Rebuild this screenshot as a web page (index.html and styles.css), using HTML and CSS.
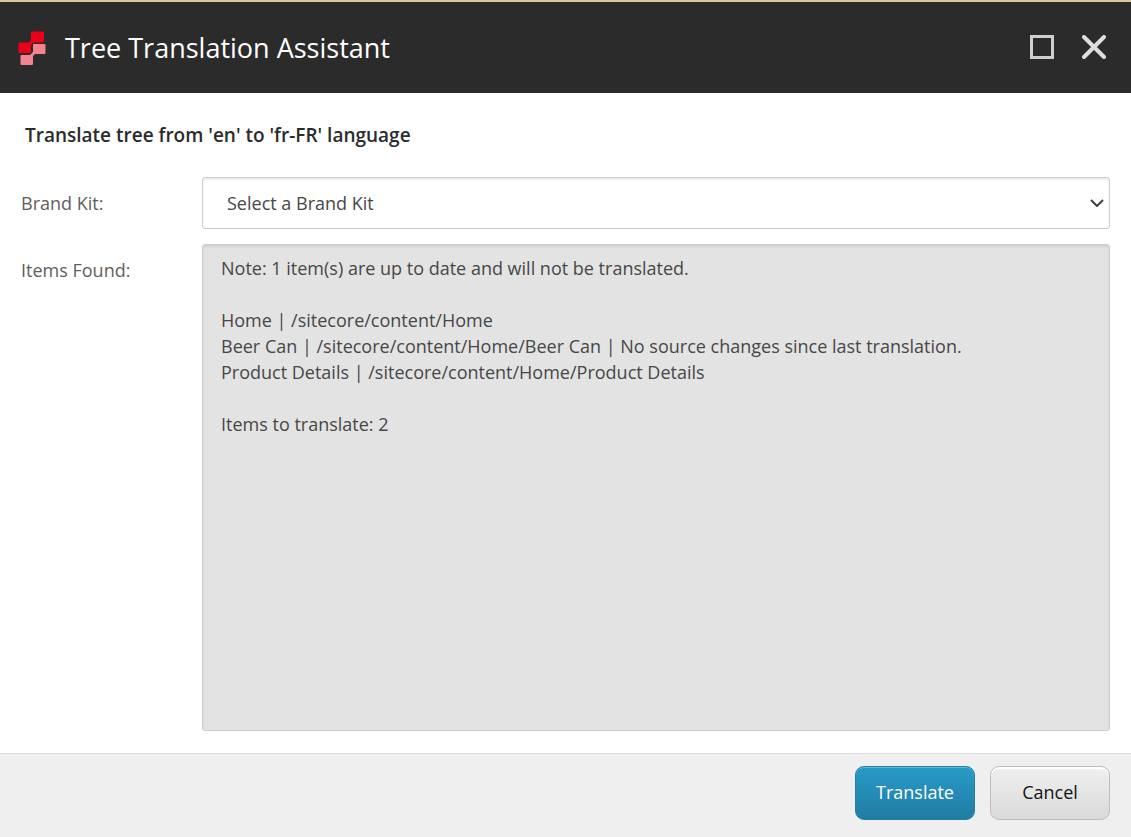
FILE: index.html
```html
<!DOCTYPE html>
<html lang="en">
<head>
<meta charset="UTF-8" />
<meta name="viewport" content="width=device-width, initial-scale=1" />
<title>Tree Translation Assistant</title>
<link rel="stylesheet" href="styles.css">
</head>
<body>

<header class="dialog-header">
  <svg class="logo" viewBox="0 0 28 34" aria-hidden="true">
    <path fill="#f5828f" d="M16 13h10.500a1 1 0 0 1 1 1v8a1 1 0 0 1-1 1h-9.500l-2 2v8a1 1 0 0 1-1 1h-10.500a1 1 0 0 1-1-1v-8a1 1 0 0 1 1-1h8.500l3-3v-7a1 1 0 0 1 1-1z"/>
    <path fill="#eb001a" d="M14 .5h11a1 1 0 0 1 1 1v9a1 1 0 0 1-1 1h-9l-3 2.500v7a1 1 0 0 1-1 1h-10.500a1 1 0 0 1-1-1v-8.500a1 1 0 0 1 1-1h9l2.500-2.500v-7.500a1 1 0 0 1 1-1z"/>
  </svg>
  <div class="dialog-title">Tree Translation Assistant</div>
  <button type="button" class="window-btn" aria-label="Maximize">
    <svg viewBox="0 0 24 24"><rect x="1.500" y="1.500" width="21" height="21" fill="none" stroke="#cfcfcf" stroke-width="3"/></svg>
  </button>
  <button type="button" class="window-btn" aria-label="Close">
    <svg viewBox="0 0 24 24"><path d="M2 2l20 20M22 2L2 22" fill="none" stroke="#dedede" stroke-width="4" stroke-linecap="round"/></svg>
  </button>
</header>

<form class="dialog-form">
  <main class="dialog-content">
    <h1>Translate tree from 'en' to 'fr-FR' language</h1>

    <div class="form-row">
      <label for="brand-kit">Brand Kit:</label>
      <div class="select-wrap">
        <select id="brand-kit">
          <option>Select a Brand Kit</option>
        </select>
        <svg class="chevron" viewBox="0 0 14 8" aria-hidden="true"><path d="M1 1l6 6 6-6" fill="none" stroke="#404040" stroke-width="2"/></svg>
      </div>
    </div>

    <div class="form-row items-row">
      <label for="items-found">Items Found:</label>
      <textarea id="items-found" readonly>Note: 1 item(s) are up to date and will not be translated.

Home | /sitecore/content/Home
Beer Can | /sitecore/content/Home/Beer Can | No source changes since last translation.
Product Details | /sitecore/content/Home/Product Details

Items to translate: 2</textarea>
    </div>
  </main>

  <footer class="dialog-footer">
    <button type="button" class="btn btn-primary">Translate</button>
    <button type="button" class="btn">Cancel</button>
  </footer>
</form>

</body>
</html>
```
FILE: styles.css
```css
* {
  box-sizing: border-box;
}
body {
  margin: 0;
  height: 100vh;
  display: flex;
  flex-direction: column;
  font-family: "Open Sans", "Noto Sans", sans-serif;
  font-size: 18px;
  color: #474747;
  background: #fff;
}
button, select, textarea {
  font: inherit;
  color: inherit;
}

/* header */
.dialog-header {
  display: flex;
  align-items: center;
  height: 93px;
  padding: 0 25px 0 18px;
  border-top: 2px solid #d9c99a;
  background: #2b2b2b;
}
.logo {
  width: 28px;
  height: 34px;
  margin-right: 19px;
}
.dialog-title {
  flex: 1;
  font-size: 27px;
  color: #fff;
}
.window-btn {
  display: flex;
  padding: 0 0 2px;
  margin-left: 28px;
  border: none;
  background: none;
  cursor: pointer;
}
.window-btn svg {
  width: 24px;
  height: 24px;
}

/* content */
.dialog-form {
  flex: 1;
  display: flex;
  flex-direction: column;
}
.dialog-content {
  flex: 1;
  display: flex;
  flex-direction: column;
  gap: 15px;
  padding: 28px 21px 22px;
}
h1 {
  margin: 0 0 13px;
  padding-left: 4px;
  font-size: 19px;
  line-height: 28px;
  font-weight: 600;
  color: #2b2b2b;
}
.form-row {
  display: flex;
}
.form-row label {
  flex: 0 0 181px;
  padding-top: 13px;
  line-height: 26px;
  color: #5e5e5e;
}
.items-row {
  flex: 1;
}
.select-wrap {
  flex: 1;
  display: grid;
  align-items: center;
}
.select-wrap > * {
  grid-area: 1 / 1;
}
select, textarea {
  border: 1px solid #ccc;
  border-radius: 3px;
  box-shadow: inset 0 2px 2px rgba(0, 0, 0, 0.08);
}
select {
  appearance: none;
  width: 100%;
  height: 52px;
  padding: 0 40px 0 24px;
  background: #fff;
}
.chevron {
  justify-self: end;
  width: 14px;
  height: 8px;
  margin-right: 6px;
  pointer-events: none;
}
textarea {
  flex: 1;
  padding: 10px 18px;
  line-height: 26px;
  background: #e3e3e3;
  resize: none;
}

/* footer */
.dialog-footer {
  display: flex;
  justify-content: flex-end;
  gap: 15px;
  padding: 12px 21px 17px;
  border-top: 1px solid #dedede;
  background: #efefef;
}
.btn {
  width: 120px;
  height: 54px;
  padding: 0 0 2px;
  border: 1px solid #bdbdbd;
  border-radius: 9px;
  color: #131313;
  background: linear-gradient(#f0f0f0, #d9d9d9);
  box-shadow: inset 0 2px 0 #fff;
  cursor: pointer;
}
.btn-primary {
  border-color: #2180a8;
  color: #fff;
  background: linear-gradient(#289bc8, #217ca3);
  box-shadow: inset 0 1px 0 #5fb8dc;
}
```
